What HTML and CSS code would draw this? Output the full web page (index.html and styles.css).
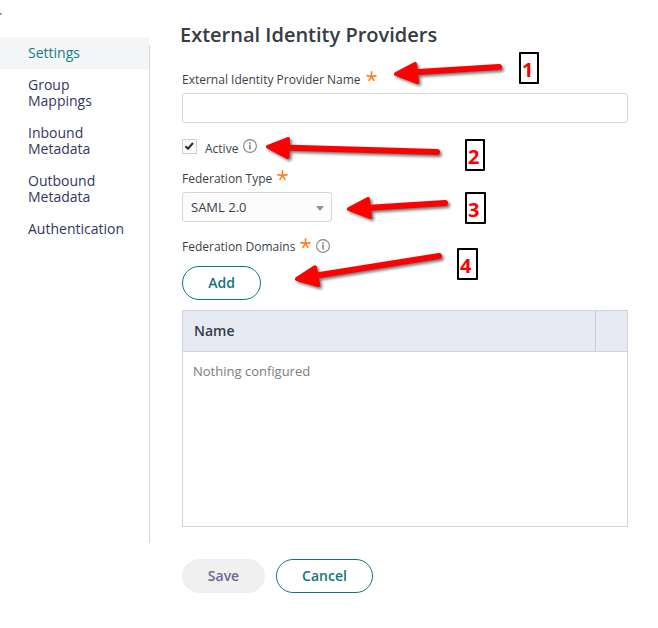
FILE: index.html
```html
<!DOCTYPE html>
<html lang="en">
<head>
<meta charset="utf-8">
<title>External Identity Providers</title>
<link rel="stylesheet" href="styles.css">
</head>
<body>
<div class="page">
  <nav class="sidebar">
    <a class="nav-item active">Settings</a>
    <a class="nav-item">Group Mappings</a>
    <a class="nav-item">Inbound Metadata</a>
    <a class="nav-item">Outbound Metadata</a>
    <a class="nav-item">Authentication</a>
  </nav>
  <main class="content">
    <h1>External Identity Providers</h1>
    <div class="label name-label"><span>External Identity Provider Name</span><svg class="star" viewBox="0 0 10 10"><path d="M5 5V.2M5 5L.4 4.200M5 5l4.600-.8M5 5L2.400 9M5 5l2.600 4"/></svg></div>
    <input class="text-input" type="text" aria-label="External Identity Provider Name">
    <div class="check-row">
      <span class="checkbox"><svg viewBox="0 0 13 13"><path d="M2.500 6.200l2.500 2.600 5-5.800"/></svg></span>
      <span class="check-label">Active</span>
      <svg class="info" viewBox="0 0 14 14"><circle cx="7" cy="7" r="6.4"/><path class="info-i" d="M7 5.600v5M7 3.200v1.500"/></svg>
    </div>
    <div class="label type-label"><span>Federation Type</span><svg class="star" viewBox="0 0 10 10"><path d="M5 5V.2M5 5L.4 4.200M5 5l4.600-.8M5 5L2.400 9M5 5l2.600 4"/></svg></div>
    <div class="select"><span>SAML 2.0</span><i class="caret"></i></div>
    <div class="label domain-label"><span>Federation Domains</span><svg class="star" viewBox="0 0 10 10"><path d="M5 5V.2M5 5L.4 4.200M5 5l4.600-.8M5 5L2.400 9M5 5l2.600 4"/></svg><svg class="info" viewBox="0 0 14 14"><circle cx="7" cy="7" r="6.4"/><path class="info-i" d="M7 5.600v5M7 3.200v1.500"/></svg></div>
    <button class="btn add">Add</button>
    <div class="table">
      <div class="thead"><div class="th">Name</div><div class="th-end"></div></div>
      <div class="empty">Nothing configured</div>
    </div>
    <div class="actions">
      <button class="btn save">Save</button>
      <button class="btn cancel">Cancel</button>
    </div>
  </main>
  <svg class="arrows" viewBox="0 0 658 628">
    <path class="speck" d="M0 13.500h2M0 14.500h1"/>
    <g class="arrow"><path class="shaft" d="M410 72.500L499 67"/><path class="head" d="M396 74L415 64L417 82Z"/></g>
    <g class="arrow"><path class="shaft" d="M282 147.400L437 152"/><path class="head" d="M268 146.800L288 139L287.500 157Z"/></g>
    <g class="arrow"><path class="shaft" d="M362 208.200L445 203"/><path class="head" d="M349 209L368 199L370 217Z"/></g>
    <g class="arrow"><path class="shaft" d="M312 276.300L439 256"/><path class="head" d="M297 279L315 267.300L318.200 285Z"/></g>
  </svg>
  <div class="mark m1">1</div>
  <div class="mark m2">2</div>
  <div class="mark m3">3</div>
  <div class="mark m4">4</div>
</div>
</body>
</html>
```
FILE: styles.css
```css
* { box-sizing: border-box; }
body { margin: 0; background: #fff; font-family: "Open Sans", sans-serif; color: #3b3f48; }
.page { position: relative; display: flex; width: 658px; height: 628px; overflow: hidden; }
.sidebar { width: 150px; height: 506px; margin-top: 37px; background: linear-gradient(#d6d6d6, #d6d6d6) 149px 8px / 1px 498px no-repeat; }
.nav-item { display: block; padding: 8px 20px 8px 28px; font-size: 14px; line-height: 16px; color: #33375f; }
.nav-item.active { width: 149px; background: #f4f5f7; color: #13808a; box-shadow: 1px -24px 0 -24px #f4f5f7; }
.content { width: 446px; margin-left: 32px; display: flex; flex-direction: column; align-items: flex-start; }
h1 { margin: 20px 0 0 -2px; font-size: 20px; line-height: 30px; font-weight: 600; color: #363b44; white-space: nowrap; }
.label { display: flex; font-size: 12px; line-height: 16px; height: 16px; white-space: nowrap; }
.name-label { margin-top: 22px; }
.star { width: 11px; height: 11px; margin: -1px 0 0 5px; fill: none; stroke: #ff7a1a; stroke-width: 1.4; }
.text-input { width: 446px; height: 30px; margin: 5px 0 0; border: 1px solid #d6d6d6; border-radius: 3px; background: #fff; }
.check-row { display: flex; height: 17px; margin-top: 16px; }
.checkbox { width: 15px; height: 15px; border: 1px solid #cfcfcf; background: #fcfcfc; }
.checkbox svg { display: block; width: 13px; height: 13px; fill: none; stroke: #2b2f38; stroke-width: 2.1; }
.check-label { margin-left: 8px; font-size: 12px; line-height: 19px; }
.info { width: 14px; height: 14px; margin-left: 5px; fill: none; stroke: #858585; stroke-width: 1.1; }
.info-i { stroke-width: 1.6; }
.type-label { margin-top: 15px; }
.select { display: flex; align-items: center; justify-content: space-between; width: 150px; height: 30px; margin-top: 5px; padding: 0 7px 0 8px; border: 1px solid #d6d6d6; border-radius: 3px; background: #fcfcfc; font-size: 13px; }
.caret { margin-top: 2px; border: solid transparent; border-width: 5px 4.5px 0; border-top-color: #929292; }
.domain-label { margin-top: 17px; }
.btn { font-family: inherit; font-size: 14px; font-weight: 600; line-height: 20px; height: 34px; padding: 0; border: 1px solid #13757d; border-radius: 17px; background: #fff; color: #13757d; }
.add { width: 79px; margin-top: 11px; }
.table { width: 446px; height: 217px; margin-top: 10px; border: 1px solid #d3d3d3; }
.thead { display: flex; height: 41px; border-bottom: 1px solid #d3d3d3; background: #e7eaf3; }
.th { flex: 1; padding-left: 11px; font-size: 14px; line-height: 40px; font-weight: 600; color: #363b44; }
.th-end { width: 32px; border-left: 1px solid #cccdd2; }
.empty { padding: 9px 10px; font-size: 13px; line-height: 20px; color: #7c7c7c; }
.actions { display: flex; gap: 11px; margin-top: 32px; }
.save { width: 83px; border-color: #f0f0f0; background: #f0f0f0; color: #696990; }
.cancel { width: 97px; }
.arrows { position: absolute; left: 0; top: 0; width: 658px; height: 628px; pointer-events: none; }
.arrow { fill: #f00; stroke: #f00; stroke-linecap: round; stroke-linejoin: round; filter: drop-shadow(2px 2px 1.5px rgba(0, 0, 0, .55)); }
.shaft { stroke-width: 6; }
.head { stroke-width: 4; }
.speck { stroke: #888; stroke-width: 1; }
.mark { position: absolute; width: 20px; height: 32px; border: 2px solid #000; border-radius: 1px; background: #fff; color: #f00; font-size: 20px; font-weight: 700; line-height: 32px; padding-left: 1px; }
.m1 { left: 519px; top: 52px; }
.m2 { left: 465px; top: 139px; }
.m3 { left: 465px; top: 192px; width: 21px; }
.m4 { left: 457px; top: 248px; width: 21px; }
```
